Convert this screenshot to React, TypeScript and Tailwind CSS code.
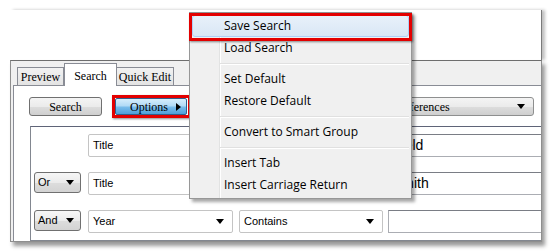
import React from "react";

const serif = { fontFamily: '"Liberation Serif", "Times New Roman", serif' };
const sans = { fontFamily: '"Liberation Sans", Arial, sans-serif' };
const ui = { fontFamily: '"Open Sans", "Noto Sans", sans-serif' };

function Arrow({ className = "" }: { className?: string }) {
  return (
    <svg width="8" height="5" viewBox="0 0 8 5" className={className}>
      <polygon points="0,0 8,0 4,5" fill="#000" />
    </svg>
  );
}

function SmallDrop({ label }: { label: string }) {
  return (
    <div
      className="w-[47px] h-[21px] shrink-0 flex items-center justify-between pl-[3px] pr-[6px] border border-[#707070] rounded-[3px] bg-[linear-gradient(to_bottom,#f6f6f6_0%,#ebebeb_50%,#dddddd_51%,#d3d3d3_100%)] text-[11px] text-black"
      style={sans}
    >
      <span>{label}</span>
      <Arrow />
    </div>
  );
}

function FieldDrop({ label, w }: { label: string; w: string }) {
  return (
    <div
      className={`${w} h-[23px] shrink-0 flex items-center justify-between pl-[4px] pr-[8px] border border-[#c4c4c4] rounded-[2px] bg-white text-[11px] text-black`}
      style={sans}
    >
      <span>{label}</span>
      <Arrow />
    </div>
  );
}

function TextBox({ text }: { text: string }) {
  return (
    <div
      className="w-[170px] h-[23px] shrink-0 flex items-center pl-[4px] border border-[#abadb3] border-t-[#7a7d85] bg-white text-[14px] text-black"
      style={sans}
    >
      {text}
    </div>
  );
}

function Row({ lead, field, op, text }: { lead?: string; field: string; op: string; text: string }) {
  return (
    <div className="flex items-start h-[23px]">
      <div className="w-[57px] shrink-0 pl-[3px]">{lead ? <SmallDrop label={lead} /> : null}</div>
      <FieldDrop label={field} w="w-[145px]" />
      <div className="w-[6px] shrink-0" />
      <FieldDrop label={op} w="w-[144px]" />
      <div className="w-[5px] shrink-0" />
      <TextBox text={text} />
    </div>
  );
}

function MenuItem({ label }: { label: string }) {
  return (
    <div className="h-[22px] flex items-center pl-[32px] text-[12px] text-black" style={ui}>
      {label}
    </div>
  );
}

function MenuSep() {
  return (
    <div className="h-[9px] flex flex-col justify-center pl-[28px]">
      <div className="h-px bg-[#e0e0e0]" />
      <div className="h-px bg-white" />
    </div>
  );
}

export default function App() {
  return (
    <div className="relative w-[552px] h-[252px] bg-white overflow-hidden">
      <div className="pl-[10px] pt-[10px] flex">
        <div className="w-[532px] flex flex-col">
          <div className="h-[50px] bg-white border-r border-[#7a7a7a] shadow-[3px_0_3px_rgba(0,0,0,0.25)]" />
          <div className="h-[182px] flex flex-col pl-[2px] bg-[#f0f0f0] border border-[#8e8e8e] border-t-[#6e6e6e] shadow-[3px_4px_4px_rgba(0,0,0,0.4)]">
            {/* tabs */}
            <div className="h-[24px] flex items-end pl-[4px] relative z-10">
              <div
                className="w-[47px] h-[18px] flex items-center justify-center border border-b-0 border-[#898c95] bg-[linear-gradient(to_bottom,#f2f2f2,#e3e3e3)] text-[12px] text-black"
                style={serif}
              >
                Preview
              </div>
              <div
                className="w-[53px] h-[23px] -mb-px flex items-start justify-center pt-[3px] border border-b-0 border-[#898c95] bg-white text-[12px] text-black"
                style={serif}
              >
                Search
              </div>
              <div
                className="w-[57px] h-[18px] flex items-center justify-center border border-l-0 border-b-0 border-[#898c95] bg-[linear-gradient(to_bottom,#f2f2f2,#e3e3e3)] text-[12px] text-black"
                style={serif}
              >
                Quick Edit
              </div>
            </div>
            {/* panel */}
            <div className="flex-1 flex flex-col bg-white border-l border-t border-[#898c95] overflow-hidden">
              <div className="mt-[11px] h-[19px] flex items-center">
                <div
                  className="ml-[15px] w-[73px] h-[19px] flex items-center justify-center border border-[#707070] rounded-[3px] bg-[linear-gradient(to_bottom,#f4f4f4_0%,#ebebeb_50%,#dddddd_51%,#cfcfcf_100%)] text-[12px] text-black"
                  style={serif}
                >
                  Search
                </div>
                <div
                  className="ml-[13px] w-[72px] h-[17px] flex items-center justify-between pl-[14px] pr-[5px] border border-[#2f5f8c] rounded-[2px] bg-[linear-gradient(to_bottom,#d6eefc_0%,#b2dbf6_45%,#78bceb_55%,#4f9fd9_100%)] text-[12px] text-black"
                  style={serif}
                >
                  <span>Options</span>
                  <svg width="5" height="8" viewBox="0 0 5 8">
                    <polygon points="0,0 5,4 0,8" fill="#000" />
                  </svg>
                </div>
                <div
                  className="ml-auto mr-[7px] w-[233px] h-[19px] flex items-center justify-between pl-[76px] pr-[8px] border border-[#8e8f8f] rounded-[3px] bg-[linear-gradient(to_bottom,#f4f4f4_0%,#ebebeb_50%,#dddddd_51%,#cfcfcf_100%)] text-[12px] text-black"
                  style={serif}
                >
                  <span>All References</span>
                  <Arrow />
                </div>
              </div>
              <div className="mt-[10px] ml-[16px] w-[530px] h-[115px] shrink-0 flex flex-col gap-[15px] pt-[7px] border-l border-t border-b border-[#828790] border-t-[#5f6478]">
                <Row field="Title" op="" text="Field" />
                <Row lead="Or" field="Title" op="" text="Smith" />
                <Row lead="And" field="Year" op="Contains" text="" />
              </div>
            </div>
          </div>
        </div>
      </div>

      {/* Options highlight box */}
      <div className="absolute left-[112px] top-[95px] w-[79px] h-[23px] border-[3px] border-[#e30000] shadow-[1px_1px_2px_rgba(0,0,0,0.45)]" />

      {/* Popup menu */}
      <div className="absolute left-[189px] top-[12px] w-[223px] p-[2px] bg-[#f0f0f0] border border-[#979797] shadow-[3px_3px_3px_rgba(0,0,0,0.35)]">
        <div className="absolute left-[29px] top-0 bottom-0 w-px bg-[#e2e3e3]" />
        <div className="absolute left-[30px] top-0 bottom-0 w-px bg-white" />
        <div className="relative">
          <div className="h-[22px] flex items-center pl-[31px] text-[12px] text-black border border-[#aecff7] rounded-[3px] bg-[linear-gradient(to_bottom,#e8f1fa,#d9e7f5)]" style={ui}>
            Save Search
          </div>
          <MenuItem label="Load Search" />
          <MenuSep />
          <MenuItem label="Set Default" />
          <MenuItem label="Restore Default" />
          <MenuSep />
          <MenuItem label="Convert to Smart Group" />
          <MenuSep />
          <MenuItem label="Insert Tab" />
          <MenuItem label="Insert Carriage Return" />
        </div>
      </div>

      {/* Save Search highlight box */}
      <div className="absolute left-[189px] top-[13px] w-[223px] h-[28px] border-[3px] border-[#e30000] shadow-[1px_1px_2px_rgba(0,0,0,0.45)]" />
    </div>
  );
}
